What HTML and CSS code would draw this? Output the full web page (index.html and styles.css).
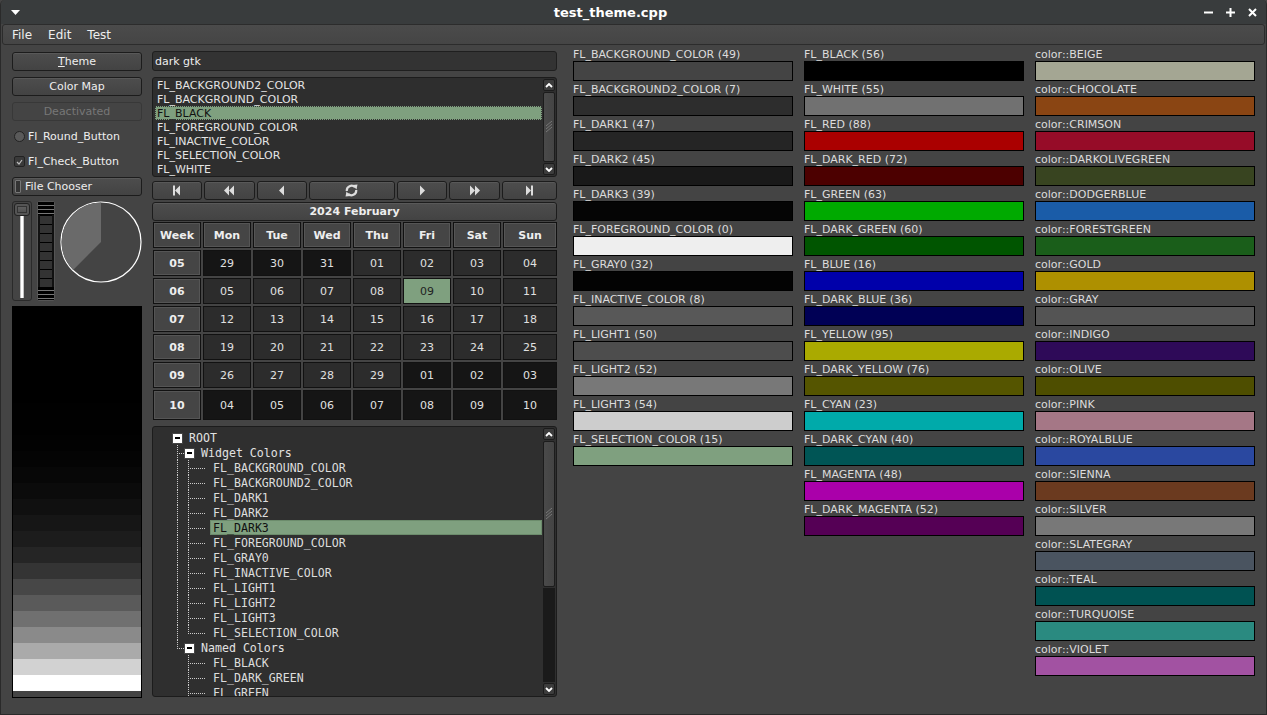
FILE: index.html
```html
<!DOCTYPE html>
<html>
<head>
<meta charset="utf-8">
<title>test_theme.cpp</title>
<link rel="stylesheet" href="styles.css">
</head>
<body>
<div class="window">
  <div class="titlebar">
    <div class="tb-left">
      <svg width="9" height="5" viewBox="0 0 9 5"><polygon points="0,0 9,0 4.5,5" fill="#fff"/></svg>
    </div>
    <div class="tb-title">test_theme.cpp</div>
    <div class="tb-right">
      <svg width="9" height="9" viewBox="0 0 9 9"><rect x="0" y="3.5" width="9" height="2" fill="#fff"/></svg>
      <svg width="9" height="9" viewBox="0 0 9 9"><rect x="0" y="3.5" width="9" height="2" fill="#fff"/><rect x="3.5" y="0" width="2" height="9" fill="#fff"/></svg>
      <svg width="9" height="9" viewBox="0 0 9 9"><path d="M1 1 L8 8 M8 1 L1 8" stroke="#fff" stroke-width="2"/></svg>
    </div>
  </div>
  <div class="menubar">
    <span class="menu-item">File</span>
    <span class="menu-item">Edit</span>
    <span class="menu-item">Test</span>
  </div>
  <div class="content">
    <div class="col-left">
      <div class="btn"><span><u>T</u>heme</span></div>
      <div class="btn">Color Map</div>
      <div class="btn btn-off">Deactivated</div>
      <div class="opt"><span class="radio"></span><span>Fl_Round_Button</span></div>
      <div class="opt"><span class="check"><svg width="7" height="6" viewBox="0 0 7 6"><path d="M1 3 L3 5 L6 1" stroke="#bbb" stroke-width="1.2" fill="none"/></svg></span><span>Fl_Check_Button</span></div>
      <div class="btn btn-left"><span class="light"></span><span>File Chooser</span></div>
      <div class="widgets">
        <div class="slider1"><div class="s1-thumb"></div><div class="s1-track"></div></div>
        <div class="slider2"><div class="s2-cap"></div><div class="s2-body"></div><div class="s2-cap"></div></div>
        <div class="dial">
          <svg width="82" height="82" viewBox="0 0 82 82">
            <circle cx="41" cy="41" r="40" fill="#444" stroke="#fff" stroke-width="1.2"/>
            <path d="M41 41 L41 1.6 A39.4 39.4 0 0 0 13.1 68.9 Z" fill="#6a6a6a"/>
          </svg>
        </div>
      </div>
      <div class="ramp">
        <div style="background:#000"></div><div style="background:#000"></div><div style="background:#000"></div>
        <div style="background:#000"></div><div style="background:#000"></div><div style="background:#000"></div>
        <div style="background:#010101"></div><div style="background:#010101"></div><div style="background:#020202"></div>
        <div style="background:#040404"></div><div style="background:#070707"></div><div style="background:#0b0b0b"></div>
        <div style="background:#101010"></div><div style="background:#161616"></div><div style="background:#1c1c1c"></div>
        <div style="background:#252525"></div><div style="background:#343434"></div><div style="background:#474747"></div>
        <div style="background:#5a5a5a"></div><div style="background:#707070"></div><div style="background:#8a8a8a"></div>
        <div style="background:#aaaaaa"></div><div style="background:#d2d2d2"></div><div style="background:#ffffff"></div>
      </div>
    </div>

    <div class="col-mid">
      <div class="input">dark gtk</div>
      <div class="browser">
        <div class="b-list">
          <div class="b-row">FL_BACKGROUND2_COLOR</div>
          <div class="b-row">FL_BACKGROUND_COLOR</div>
          <div class="b-row b-sel">FL_BLACK</div>
          <div class="b-row">FL_FOREGROUND_COLOR</div>
          <div class="b-row">FL_INACTIVE_COLOR</div>
          <div class="b-row">FL_SELECTION_COLOR</div>
          <div class="b-row">FL_WHITE</div>
        </div>
        <div class="sb">
          <div class="sb-btn"><svg width="8" height="5" viewBox="0 0 8 5"><path d="M1 4 L4 1 L7 4" stroke="#fff" stroke-width="1.8" fill="none"/></svg></div>
          <div class="sb-thumb grow"><svg width="7" height="12" viewBox="0 0 7 12"><path d="M0 5 L6 0 M0 8 L6 3 M0 11 L6 6" stroke="#777" stroke-width="1"/></svg></div>
          <div class="sb-btn"><svg width="8" height="5" viewBox="0 0 8 5"><path d="M1 1 L4 4 L7 1" stroke="#fff" stroke-width="1.8" fill="none"/></svg></div>
        </div>
      </div>
      <div class="nav">
        <div class="btn"><svg width="10" height="11" viewBox="0 0 10 11"><rect x="1" y="0.5" width="2" height="10" fill="#ddd"/><polygon points="8,0.5 3,5.5 8,10.5" fill="#ddd"/></svg></div>
        <div class="btn"><svg width="10" height="11" viewBox="0 0 10 11"><polygon points="5,0.5 0,5.5 5,10.5" fill="#ddd"/><polygon points="10,0.5 5,5.5 10,10.5" fill="#ddd"/></svg></div>
        <div class="btn"><svg width="6" height="11" viewBox="0 0 6 11"><polygon points="5,0.5 0,5.5 5,10.5" fill="#ddd"/></svg></div>
        <div class="btn"><svg width="13" height="13" viewBox="0 0 13 13"><path d="M1.8 7 A4.8 4.8 0 0 1 10 3.2" stroke="#ddd" stroke-width="2.2" fill="none"/><polygon points="7.5,1 12.5,0.5 11.5,5.5" fill="#ddd"/><path d="M11.2 6 A4.8 4.8 0 0 1 3 9.8" stroke="#ddd" stroke-width="2.2" fill="none"/><polygon points="5.5,12 0.5,12.5 1.5,7.5" fill="#ddd"/></svg></div>
        <div class="btn"><svg width="6" height="11" viewBox="0 0 6 11"><polygon points="1,0.5 6,5.5 1,10.5" fill="#ddd"/></svg></div>
        <div class="btn"><svg width="10" height="11" viewBox="0 0 10 11"><polygon points="0,0.5 5,5.5 0,10.5" fill="#ddd"/><polygon points="5,0.5 10,5.5 5,10.5" fill="#ddd"/></svg></div>
        <div class="btn"><svg width="10" height="11" viewBox="0 0 10 11"><polygon points="2,0.5 7,5.5 2,10.5" fill="#ddd"/><rect x="7" y="0.5" width="2" height="10" fill="#ddd"/></svg></div>
      </div>
      <div class="btn cal-title">2024 February</div>
      <div class="cal">
        <div class="c-h">Week</div><div class="c-h">Mon</div><div class="c-h">Tue</div><div class="c-h">Wed</div><div class="c-h">Thu</div><div class="c-h">Fri</div><div class="c-h">Sat</div><div class="c-h">Sun</div>
        <div class="c-h">05</div><div class="c-d c-o">29</div><div class="c-d c-o">30</div><div class="c-d c-o">31</div><div class="c-d">01</div><div class="c-d">02</div><div class="c-d">03</div><div class="c-d">04</div>
        <div class="c-h">06</div><div class="c-d">05</div><div class="c-d">06</div><div class="c-d">07</div><div class="c-d">08</div><div class="c-d c-sel">09</div><div class="c-d">10</div><div class="c-d">11</div>
        <div class="c-h">07</div><div class="c-d">12</div><div class="c-d">13</div><div class="c-d">14</div><div class="c-d">15</div><div class="c-d">16</div><div class="c-d">17</div><div class="c-d">18</div>
        <div class="c-h">08</div><div class="c-d">19</div><div class="c-d">20</div><div class="c-d">21</div><div class="c-d">22</div><div class="c-d">23</div><div class="c-d">24</div><div class="c-d">25</div>
        <div class="c-h">09</div><div class="c-d">26</div><div class="c-d">27</div><div class="c-d">28</div><div class="c-d">29</div><div class="c-d c-o">01</div><div class="c-d c-o">02</div><div class="c-d c-o">03</div>
        <div class="c-h">10</div><div class="c-d c-o">04</div><div class="c-d c-o">05</div><div class="c-d c-o">06</div><div class="c-d c-o">07</div><div class="c-d c-o">08</div><div class="c-d c-o">09</div><div class="c-d c-o">10</div>
      </div>
      <div class="tree">
        <div class="t-list">
          <div class="t-row"><span class="sp19"></span><span class="exp"></span><span class="t-txt t-g">ROOT</span></div>
          <div class="t-row"><span class="sp24"></span><span class="tee7"></span><span class="exp"></span><span class="t-txt t-g">Widget Colors</span></div>
          <div class="t-row"><span class="sp24"></span><span class="vl11"></span><span class="tee17"></span><span class="t-leaf">FL_BACKGROUND_COLOR</span></div>
          <div class="t-row"><span class="sp24"></span><span class="vl11"></span><span class="tee17"></span><span class="t-leaf">FL_BACKGROUND2_COLOR</span></div>
          <div class="t-row"><span class="sp24"></span><span class="vl11"></span><span class="tee17"></span><span class="t-leaf">FL_DARK1</span></div>
          <div class="t-row"><span class="sp24"></span><span class="vl11"></span><span class="tee17"></span><span class="t-leaf">FL_DARK2</span></div>
          <div class="t-row"><span class="sp24"></span><span class="vl11"></span><span class="tee17"></span><span class="t-leaf t-sel">FL_DARK3</span></div>
          <div class="t-row"><span class="sp24"></span><span class="vl11"></span><span class="tee17"></span><span class="t-leaf">FL_FOREGROUND_COLOR</span></div>
          <div class="t-row"><span class="sp24"></span><span class="vl11"></span><span class="tee17"></span><span class="t-leaf">FL_GRAY0</span></div>
          <div class="t-row"><span class="sp24"></span><span class="vl11"></span><span class="tee17"></span><span class="t-leaf">FL_INACTIVE_COLOR</span></div>
          <div class="t-row"><span class="sp24"></span><span class="vl11"></span><span class="tee17"></span><span class="t-leaf">FL_LIGHT1</span></div>
          <div class="t-row"><span class="sp24"></span><span class="vl11"></span><span class="tee17"></span><span class="t-leaf">FL_LIGHT2</span></div>
          <div class="t-row"><span class="sp24"></span><span class="vl11"></span><span class="tee17"></span><span class="t-leaf">FL_LIGHT3</span></div>
          <div class="t-row"><span class="sp24"></span><span class="vl11"></span><span class="ell17"></span><span class="t-leaf">FL_SELECTION_COLOR</span></div>
          <div class="t-row"><span class="sp24"></span><span class="ell7"></span><span class="exp"></span><span class="t-txt t-g">Named Colors</span></div>
          <div class="t-row"><span class="sp24"></span><span class="sp11"></span><span class="tee17"></span><span class="t-leaf">FL_BLACK</span></div>
          <div class="t-row"><span class="sp24"></span><span class="sp11"></span><span class="tee17"></span><span class="t-leaf">FL_DARK_GREEN</span></div>
          <div class="t-row"><span class="sp24"></span><span class="sp11"></span><span class="tee17"></span><span class="t-leaf">FL_GREEN</span></div>
        </div>
        <div class="sb">
          <div class="sb-btn"><svg width="8" height="5" viewBox="0 0 8 5"><path d="M1 4 L4 1 L7 4" stroke="#fff" stroke-width="1.8" fill="none"/></svg></div>
          <div class="sb-thumb tall"><svg width="7" height="12" viewBox="0 0 7 12"><path d="M0 5 L6 0 M0 8 L6 3 M0 11 L6 6" stroke="#777" stroke-width="1"/></svg></div>
          <div class="sb-track"></div>
          <div class="sb-btn"><svg width="8" height="5" viewBox="0 0 8 5"><path d="M1 1 L4 4 L7 1" stroke="#fff" stroke-width="1.8" fill="none"/></svg></div>
        </div>
      </div>
    </div>

    <div class="swcol first">
      <div class="sw-label">FL_BACKGROUND_COLOR (49)</div><div class="sw" style="background:#444444"></div>
      <div class="sw-label">FL_BACKGROUND2_COLOR (7)</div><div class="sw" style="background:#2d2d2d"></div>
      <div class="sw-label">FL_DARK1 (47)</div><div class="sw" style="background:#252525"></div>
      <div class="sw-label">FL_DARK2 (45)</div><div class="sw" style="background:#191919"></div>
      <div class="sw-label">FL_DARK3 (39)</div><div class="sw" style="background:#050505"></div>
      <div class="sw-label">FL_FOREGROUND_COLOR (0)</div><div class="sw" style="background:#eeeeee"></div>
      <div class="sw-label">FL_GRAY0 (32)</div><div class="sw" style="background:#030303"></div>
      <div class="sw-label">FL_INACTIVE_COLOR (8)</div><div class="sw" style="background:#585858"></div>
      <div class="sw-label">FL_LIGHT1 (50)</div><div class="sw" style="background:#4d4d4d"></div>
      <div class="sw-label">FL_LIGHT2 (52)</div><div class="sw" style="background:#787878"></div>
      <div class="sw-label">FL_LIGHT3 (54)</div><div class="sw" style="background:#cdcdcd"></div>
      <div class="sw-label">FL_SELECTION_COLOR (15)</div><div class="sw" style="background:#7fa07f"></div>
    </div>
    <div class="swcol">
      <div class="sw-label">FL_BLACK (56)</div><div class="sw" style="background:#000000"></div>
      <div class="sw-label">FL_WHITE (55)</div><div class="sw" style="background:#717171"></div>
      <div class="sw-label">FL_RED (88)</div><div class="sw" style="background:#aa0000"></div>
      <div class="sw-label">FL_DARK_RED (72)</div><div class="sw" style="background:#4c0000"></div>
      <div class="sw-label">FL_GREEN (63)</div><div class="sw" style="background:#00aa00"></div>
      <div class="sw-label">FL_DARK_GREEN (60)</div><div class="sw" style="background:#005500"></div>
      <div class="sw-label">FL_BLUE (16)</div><div class="sw" style="background:#0000aa"></div>
      <div class="sw-label">FL_DARK_BLUE (36)</div><div class="sw" style="background:#000055"></div>
      <div class="sw-label">FL_YELLOW (95)</div><div class="sw" style="background:#aaaa00"></div>
      <div class="sw-label">FL_DARK_YELLOW (76)</div><div class="sw" style="background:#555500"></div>
      <div class="sw-label">FL_CYAN (23)</div><div class="sw" style="background:#00aaaa"></div>
      <div class="sw-label">FL_DARK_CYAN (40)</div><div class="sw" style="background:#005555"></div>
      <div class="sw-label">FL_MAGENTA (48)</div><div class="sw" style="background:#aa00aa"></div>
      <div class="sw-label">FL_DARK_MAGENTA (52)</div><div class="sw" style="background:#550055"></div>
    </div>
    <div class="swcol">
      <div class="sw-label">color::BEIGE</div><div class="sw" style="background:#a4a693"></div>
      <div class="sw-label">color::CHOCOLATE</div><div class="sw" style="background:#8a4513"></div>
      <div class="sw-label">color::CRIMSON</div><div class="sw" style="background:#960c28"></div>
      <div class="sw-label">color::DARKOLIVEGREEN</div><div class="sw" style="background:#384420"></div>
      <div class="sw-label">color::DODGERBLUE</div><div class="sw" style="background:#1a5ca8"></div>
      <div class="sw-label">color::FORESTGREEN</div><div class="sw" style="background:#1a5e1a"></div>
      <div class="sw-label">color::GOLD</div><div class="sw" style="background:#ae9000"></div>
      <div class="sw-label">color::GRAY</div><div class="sw" style="background:#545454"></div>
      <div class="sw-label">color::INDIGO</div><div class="sw" style="background:#2e0a58"></div>
      <div class="sw-label">color::OLIVE</div><div class="sw" style="background:#4e4e00"></div>
      <div class="sw-label">color::PINK</div><div class="sw" style="background:#a57786"></div>
      <div class="sw-label">color::ROYALBLUE</div><div class="sw" style="background:#2a48a0"></div>
      <div class="sw-label">color::SIENNA</div><div class="sw" style="background:#6b3a1f"></div>
      <div class="sw-label">color::SILVER</div><div class="sw" style="background:#787878"></div>
      <div class="sw-label">color::SLATEGRAY</div><div class="sw" style="background:#4a5460"></div>
      <div class="sw-label">color::TEAL</div><div class="sw" style="background:#005252"></div>
      <div class="sw-label">color::TURQUOISE</div><div class="sw" style="background:#2a8a80"></div>
      <div class="sw-label">color::VIOLET</div><div class="sw" style="background:#a252a2"></div>
    </div>
  </div>
</div>
</body>
</html>
```

FILE: styles.css
```css
* { box-sizing: border-box; }
html, body { margin: 0; padding: 0; }
body {
  width: 1267px; height: 715px; overflow: hidden;
  background: #444;
  font-family: "DejaVu Sans", "Noto Sans", sans-serif;
  font-size: 11px;
  color: #ddd;
}
.window {
  width: 1267px; height: 715px;
  display: flex; flex-direction: column;
  background: #444;
  border: 1px solid #2a2a2a; border-top: none;
  border-radius: 5px 5px 0 0;
  overflow: hidden;
}
/* title bar */
.titlebar {
  height: 24px; flex: none;
  background: #393c3d;
  display: flex; align-items: center;
  color: #fff;
}
.tb-left { width: 26px; padding-left: 10px; display: flex; align-items: center; }
.tb-title { flex: 1; text-align: center; font-weight: bold; font-size: 13px; }
.tb-right { width: 72px; display: flex; justify-content: flex-end; gap: 13px; padding-right: 9px; }
.tb-right svg { display: block; }

/* menu bar */
.menubar {
  height: 21px; flex: none;
  margin: 0 1px 0 1px;
  border: 1px solid #2c2c2c;
  border-radius: 3px;
  background: linear-gradient(#4b4b4b, #454545);
  display: flex; align-items: center;
  padding-left: 1px; padding-top: 1px;
  font-size: 12px; color: #eee;
}
.menu-item { padding: 0 8px; }

/* content */
.content { flex: 1; display: flex; align-items: flex-start; padding-left: 11px; }

.col-left { width: 130px; margin-top: 7px; display: flex; flex-direction: column; gap: 6px; }
.btn {
  height: 19px;
  border: 1px solid #1c1c1c;
  border-radius: 3px;
  background: linear-gradient(#4d4d4d, #434343);
  box-shadow: inset 0 1px 0 rgba(255,255,255,0.07);
  display: flex; align-items: center; justify-content: center;
  color: #eee;
}
.btn svg { display: block; }
.btn-off { color: #777; border-color: #383838; background: #444; box-shadow: none; }
.btn-left { justify-content: flex-start; padding-left: 2px; gap: 4px; }
.light { width: 6px; height: 13px; border: 1px solid #777; background: #333; border-radius: 1px; }
.opt { height: 19px; display: flex; align-items: center; gap: 3px; padding-left: 2px; color: #eee; }
.radio { width: 11px; height: 11px; border-radius: 50%; border: 1px solid #222; background: #5a5a5a; }
.check { width: 11px; height: 11px; border-radius: 2px; border: 1px solid #222; background: #3a3a3a; display: flex; align-items: center; justify-content: center; }

.widgets { height: 100px; margin-top: -1px; display: flex; gap: 5px; }
.slider1 {
  width: 20px; height: 100px;
  border: 1px solid #2a2a2a; border-radius: 3px;
  background: #444;
  display: flex; flex-direction: column; align-items: center;
  padding: 1px 1px 2px;
}
.s1-thumb {
  width: 16px; height: 13px; flex: none;
  border: 1px solid #222; border-radius: 3px;
  background: linear-gradient(#666, #4a4a4a);
  box-shadow: inset 0 0 0 2px #555, inset 0 0 0 3px #333;
}
.s1-track {
  width: 4px; flex: 1;
  background: linear-gradient(to right, #999, #fff 30%, #fff 70%, #999);
}
.slider2 {
  width: 19px; height: 100px;
  border: 1px solid #555; border-radius: 2px;
  background: #111;
  display: flex; flex-direction: column;
}
.s2-cap {
  height: 13px; flex: none;
  background: repeating-linear-gradient(to bottom, #000 0 3px, #777 3px 4px);
}
.s2-body {
  flex: 1;
  background: repeating-linear-gradient(to bottom, #000 0 1px, #333 1px 9px);
  border-left: 2px solid #111; border-right: 2px solid #111;
}
.dial { width: 82px; height: 100px; margin-left: 0; }
.dial svg { display: block; }

.ramp {
  height: 392px; margin-top: -1px;
  border: 1px solid #000;
  background: #444;
  display: flex; flex-direction: column;
}
.ramp div { height: 16px; flex: none; }

/* middle column */
.col-mid { width: 405px; margin-left: 10px; margin-top: 6px; display: flex; flex-direction: column; }
.input {
  height: 20px;
  border: 1px solid #1f1f1f; border-radius: 3px;
  background: #333;
  padding-left: 2px;
  display: flex; align-items: center;
  color: #eee;
}
.browser {
  height: 100px; margin-top: 6px;
  border: 1px solid #1c1c1c; border-radius: 3px;
  background: #2e2e2e;
  display: flex;
}
.b-list { flex: 1; padding: 0 1px 0 2px; }
.b-row { height: 14px; line-height: 16px; padding-left: 2px; color: #e4e4e4; white-space: nowrap; overflow: hidden; }
.b-sel { background: #7fa07f; color: #111; outline: 1px dotted #333; outline-offset: -1px; }

.sb { width: 12px; margin: 1px 1px 1px 0; display: flex; flex-direction: column; gap: 1px; flex: none; }
.sb-btn {
  height: 12px; flex: none;
  border: 1px solid #1c1c1c; border-radius: 2px;
  background: #3c3c3c;
  display: flex; align-items: center; justify-content: center;
}
.sb-btn svg, .sb-thumb svg { display: block; }
.sb-thumb {
  border: 1px solid #1c1c1c; border-radius: 2px;
  background: linear-gradient(to right, #4a4a4a, #444);
  display: flex; align-items: center; justify-content: center;
}
.sb-thumb.grow { flex: 1; }
.sb-thumb.tall { height: 146px; flex: none; }
.sb-track { flex: 1; background: #1a1a1a; }

.nav {
  height: 19px; margin-top: 4px;
  display: grid;
  grid-template-columns: 50fr 50fr 50fr 86fr 50fr 50fr 55fr;
  gap: 2px;
}
.cal-title { margin-top: 2px; font-weight: bold; }
.cal {
  margin-top: 1px; padding-left: 1px;
  display: grid;
  grid-template-columns: repeat(7, 48px) 1fr;
  grid-template-rows: repeat(6, 26px) 30px;
  gap: 2px;
}
.c-h, .c-d {
  border: 1px solid #111;
  display: flex; align-items: center; justify-content: center;
}
.c-h {
  background: #454545;
  box-shadow: inset 0 0 0 1px #555;
  font-weight: bold; color: #eee;
}
.c-d { background: #2c2c2c; color: #e0e0e0; }
.c-o { background: #151515; }
.c-sel { background: #7fa07f; color: #222; }

.tree {
  height: 271px; margin-top: 6px;
  border: 1px solid #1c1c1c; border-radius: 3px;
  background: #2f2f2f;
  display: flex; overflow: hidden;
}
.t-list { flex: 1; padding-top: 3px; padding-right: 1px; overflow: hidden; }
.t-row {
  height: 15px; display: flex; align-items: stretch;
  font-family: "DejaVu Sans Mono", monospace; font-size: 11.6px;
  color: #ddd; white-space: nowrap;
}
.sp19 { width: 19px; flex: none; }
.sp24 { width: 24px; flex: none; }
.sp11 { width: 11px; flex: none; }
.exp {
  width: 11px; height: 11px; align-self: center; flex: none;
  background: #fff linear-gradient(#000, #000) center / 5px 2px no-repeat;
  border: 1px solid #444;
  margin-top: 1px;
}
.t-txt { margin-left: 6px; line-height: 17px; }
.t-g { color: #e2e2e2; }
.vl11, .tee7, .ell7, .tee17, .ell17 { flex: none; }
.vl11 { width: 11px;
  background: repeating-linear-gradient(to bottom, #ccc 0 1px, transparent 1px 2px) 0 0 / 1px 100% no-repeat; }
.tee7, .tee17 {
  background:
    repeating-linear-gradient(to bottom, #ccc 0 1px, transparent 1px 2px) 0 0 / 1px 100% no-repeat,
    repeating-linear-gradient(to right, #ccc 0 1px, transparent 1px 2px) 0 8px / 100% 1px no-repeat;
}
.ell7, .ell17 {
  background:
    repeating-linear-gradient(to bottom, #ccc 0 1px, transparent 1px 2px) 0 0 / 1px 9px no-repeat,
    repeating-linear-gradient(to right, #ccc 0 1px, transparent 1px 2px) 0 8px / 100% 1px no-repeat;
}
.tee7, .ell7 { width: 7px; }
.tee17, .ell17 { width: 17px; }
.t-leaf { flex: 1; margin-left: 5px; padding-left: 3px; line-height: 17px; overflow: hidden; }
.t-sel { background: #7fa07f; color: #111; box-shadow: inset 0 0 0 1px #6c8c6c; }

/* swatches */
.swcol { width: 220px; margin-left: 11px; margin-top: 2px; display: flex; flex-direction: column; }
.swcol.first { margin-left: 16px; }
.sw-label { height: 14px; line-height: 16px; color: #dcdcdc; white-space: nowrap; }
.sw { height: 20px; border: 1px solid #000; margin-bottom: 1px; }
```
